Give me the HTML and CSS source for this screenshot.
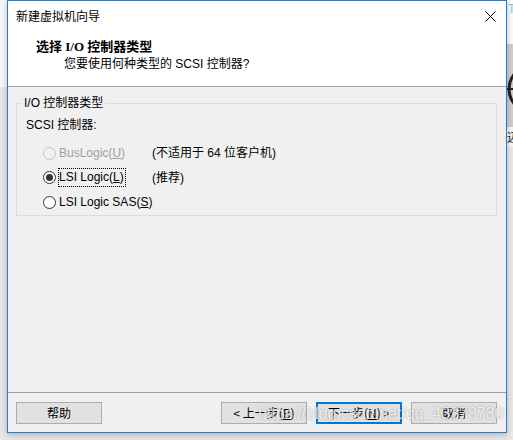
FILE: index.html
```html
<!DOCTYPE html>
<html lang="zh-CN">
<head>
<meta charset="utf-8">
<title>新建虚拟机向导</title>
<link rel="stylesheet" href="styles.css">
</head>
<body>
<div class="screen">
  <div class="left-strip">
    <div class="ls-top"></div>
    <div class="ls-bottom"></div>
  </div>
  <div class="window">
    <div class="titlebar">
      <span class="title-text">新建虚拟机向导</span>
      <svg class="close" width="11" height="11" viewBox="0 0 11 11"><path d="M0.5 0.5 L10.5 10.5 M10.5 0.5 L0.5 10.5" stroke="#000" stroke-width="1" fill="none"/></svg>
    </div>
    <div class="header">
      <div class="h-title">选择 I/O 控制器类型</div>
      <div class="h-sub">您要使用何种类型的 SCSI 控制器?</div>
    </div>
    <div class="content">
      <fieldset class="group">
        <legend class="legend">I/O 控制器类型</legend>
        <div class="label">SCSI 控制器:</div>
        <div class="row">
          <span class="radio disabled"></span>
          <span class="opt-cell"><span class="opt disabled-text">BusLogic(<u>U</u>)</span></span>
          <span class="note">(不适用于 64 位客户机)</span>
        </div>
        <div class="row">
          <span class="radio checked"></span>
          <span class="opt-cell"><span class="opt focus">LSI Logic(<u>L</u>)</span></span>
          <span class="note">(推荐)</span>
        </div>
        <div class="row">
          <span class="radio"></span>
          <span class="opt-cell wide"><span class="opt">LSI Logic SAS(<u>S</u>)</span></span>
        </div>
      </fieldset>
    </div>
    <div class="footer">
      <button class="btn">帮助</button>
      <div class="spacer"></div>
      <button class="btn">&lt; 上一步(<u>B</u>)</button>
      <button class="btn primary">下一步(<u>N</u>) &gt;</button>
      <button class="btn">取消</button>
    </div>
  </div>
  <div class="right-strip">
    <div class="rs-top"><span class="rs-t">T</span></div>
    <div class="rs-dark">
      <svg width="6" height="83" viewBox="0 0 6 83"><circle cx="26" cy="45" r="24" stroke="#222" stroke-width="3" fill="none"/><rect x="0" y="44" width="6" height="2" fill="#222"/></svg>
    </div>
    <div class="rs-text"><span>迈</span></div>
    <div class="rs-bottom"></div>
  </div>
  <div class="watermark">https://blog.csdn.net/qq_43378780</div>
</div>
</body>
</html>
```
FILE: styles.css
```css
html, body {
  margin: 0;
  padding: 0;
  background: #e4e4e4;
}
.screen {
  position: relative;
  width: 513px;
  height: 440px;
  overflow: hidden;
  display: flex;
  align-items: flex-start;
  font-family: "Liberation Sans", "Noto Sans CJK SC", sans-serif;
  font-size: 12px;
  color: #000;
}
.left-strip {
  width: 7px;
  height: 440px;
  display: flex;
  flex-direction: column;
}
.ls-top {
  height: 87px;
  background: #f7f7f7;
}
.ls-bottom {
  flex: 1;
  background: #e6e6e6;
}
.window {
  width: 498px;
  height: 431px;
  border: 1px solid #1a80d8;
  background: #f0f0f0;
  display: flex;
  flex-direction: column;
  box-shadow: 0 1px 6px rgba(0, 0, 0, 0.25);
  position: relative;
  z-index: 1;
}
.titlebar {
  height: 30px;
  background: #fff;
  display: flex;
  align-items: center;
  padding: 0 10px 0 8px;
}
.title-text {
  flex: 1;
  font-family: "Noto Sans CJK SC", sans-serif;
  font-size: 12px;
  line-height: 16px;
}
.close {
  display: block;
}
.header {
  background: #fff;
  padding: 8px 0 14px 0;
  border-bottom: 1px solid #a0a0a0;
}
.h-title {
  font-family: "Liberation Serif", "Noto Sans CJK SC", serif;
  font-weight: bold;
  font-size: 13px;
  line-height: 16px;
  padding-left: 28px;
}
.h-sub {
  font-size: 12px;
  line-height: 16px;
  padding-left: 56px;
  margin-top: 1px;
}
.content {
  flex: 1;
  padding: 8px 9px 0 8px;
}
.group {
  margin: 0;
  border: 1px solid #dcdcdc;
  padding: 6px 9px 0 9px;
  min-width: 0;
}
.legend {
  padding: 0 2px;
  margin-left: -4px;
  line-height: 16px;
}
.label {
  line-height: 16px;
  margin-bottom: 8px;
}
.row {
  height: 24.5px;
  display: flex;
  align-items: center;
  padding-left: 17px;
  white-space: nowrap;
}
.radio {
  width: 11px;
  height: 11px;
  border: 1px solid #333;
  border-radius: 50%;
  background: #fff;
  flex: none;
  display: flex;
  align-items: center;
  justify-content: center;
  margin-right: 2px;
}
.radio.disabled {
  border-color: #c4c4c4;
  background: #f0f0f0;
}
.radio.checked::after {
  content: "";
  width: 7px;
  height: 7px;
  border-radius: 50%;
  background: #333;
}
.opt-cell {
  width: 94px;
  flex: none;
  display: flex;
}
.opt-cell.wide {
  width: auto;
}
.opt {
  line-height: 17px;
  border: 1px solid transparent;
  padding: 0 1px 0 0;
  white-space: nowrap;
}
.opt.focus {
  border: 1px dotted #000;
}
.disabled-text {
  color: #a0a0a0;
}
.note {
  line-height: 16px;
  white-space: nowrap;
}
.footer {
  border-top: 1px solid #a0a0a0;
  display: flex;
  align-items: flex-start;
  padding: 9px 9px 0 8px;
  box-sizing: border-box;
  height: 40px;
}
.spacer {
  flex: 1;
}
.btn {
  width: 86px;
  height: 22px;
  margin: 0 0 0 9px;
  padding: 0;
  background: #e1e1e1;
  border: 1px solid #adadad;
  font-family: "Noto Sans CJK SC", "Liberation Sans", sans-serif;
  font-size: 12px;
  line-height: 18px;
  color: #000;
}
.btn:first-child {
  margin-left: 0;
}
.btn.primary {
  border: 2px solid #0078d7;
}
.right-strip {
  width: 6px;
  height: 440px;
  display: flex;
  flex-direction: column;
  overflow: hidden;
}
.rs-top {
  height: 44px;
  background: #fafafa;
  overflow: hidden;
}
.rs-t {
  display: block;
  color: #8cc6e0;
  font-size: 12px;
  line-height: 16px;
  margin-left: 1px;
  margin-top: 1px;
}
.rs-dark {
  height: 83px;
  background: #cfcfcf;
}
.rs-dark svg {
  display: block;
}
.rs-text {
  height: 20px;
  background: #f4f4f4;
  overflow: hidden;
}
.rs-text span {
  display: block;
  font-family: "Noto Sans CJK SC", sans-serif;
  font-size: 12px;
  line-height: 20px;
  color: #222;
}
.rs-bottom {
  flex: 1;
  background: #e8e8e8;
}
.watermark {
  position: absolute;
  left: 258px;
  top: 404px;
  z-index: 2;
  font-family: "Liberation Sans", sans-serif;
  font-size: 16px;
  line-height: 20px;
  color: rgba(255, 255, 255, 0.8);
  text-shadow: 0 0 2px rgba(0, 0, 0, 0.35);
  white-space: nowrap;
}
```
